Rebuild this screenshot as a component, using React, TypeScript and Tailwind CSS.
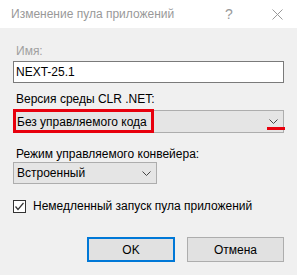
import React from "react";

const Chevron = () => (
  <svg width="9" height="5" viewBox="0 0 9 5" className="block">
    <path d="M0.5 0.5 L4.5 4.5 L8.5 0.5" fill="none" stroke="#444" strokeWidth="1" />
  </svg>
);

export default function App() {
  return (
    <div className="w-[297px] h-[275px] bg-[#f0f0f0] overflow-hidden text-[12px] text-black font-['Liberation_Sans',Arial,sans-serif]">
      <div className="h-[28px] bg-white flex items-center pl-[11px] text-[#999]">
        <span className="flex-1 text-[12px] leading-[16px]">Изменение пула приложений</span>
        <span className="w-[10px] text-center text-[14px] leading-[16px] mr-[38px]">?</span>
        <svg width="11" height="11" viewBox="0 0 11 11" className="mr-[14px]">
          <path d="M0.5 0.5 L10.5 10.5 M10.5 0.5 L0.5 10.5" stroke="#999" strokeWidth="1" />
        </svg>
      </div>
      <div className="pl-[13px] flex flex-col">
        <div className="mt-[15px] h-[16px] leading-[16px] pl-[3px] text-[#a0a0a0]">Имя:</div>
        <div className="mt-[2px] w-[271px] h-[22px] bg-white border border-[#7a7a7a] flex items-center pl-[2px] leading-[16px]">
          NEXT-25.1
        </div>
        <div className="mt-[8px] h-[16px] leading-[16px] pl-[3px]">Версия среды CLR .NET:</div>
        <div className="relative mt-[3px] w-[271px] h-[23px] bg-[#e5e5e5] border border-[#adadad] flex items-center pl-[3px] pr-[5px]">
          <span className="flex-1 leading-[16px]">Без управляемого кода</span>
          <Chevron />
          <div className="absolute left-[-1px] top-[-2px] w-[141px] h-[24px] border-[3px] border-[#e8000d]" />
          <div className="absolute left-[253px] top-[16px] w-[18px] h-[3px] bg-[#e8000d]" />
        </div>
        <div className="mt-[13px] h-[16px] leading-[16px] pl-[3px]">Режим управляемого конвейера:</div>
        <div className="w-[144px] h-[22px] bg-[#e5e5e5] border border-[#adadad] flex items-center pl-[3px] pr-[5px]">
          <span className="flex-1 leading-[16px]">Встроенный</span>
          <Chevron />
        </div>
        <div className="mt-[14px] h-[16px] flex items-center">
          <div className="w-[13px] h-[13px] border border-[#333] bg-white flex items-center justify-center">
            <svg width="11" height="11" viewBox="0 0 11 11">
              <path d="M1.5 5.5 L4 8.5 L9.5 2" fill="none" stroke="#333" strokeWidth="1.2" />
            </svg>
          </div>
          <span className="ml-[7px] leading-[16px]">Немедленный запуск пула приложений</span>
        </div>
        <div className="mt-[23px] flex pl-[74px] gap-[12px]">
          <div className="w-[88px] h-[25px] bg-[#e1e1e1] border-2 border-[#0078d7] flex items-center justify-center leading-[16px]">
            OK
          </div>
          <div className="w-[97px] h-[25px] bg-[#e1e1e1] border border-[#adadad] flex items-center justify-center leading-[16px]">
            Отмена
          </div>
        </div>
      </div>
    </div>
  );
}
